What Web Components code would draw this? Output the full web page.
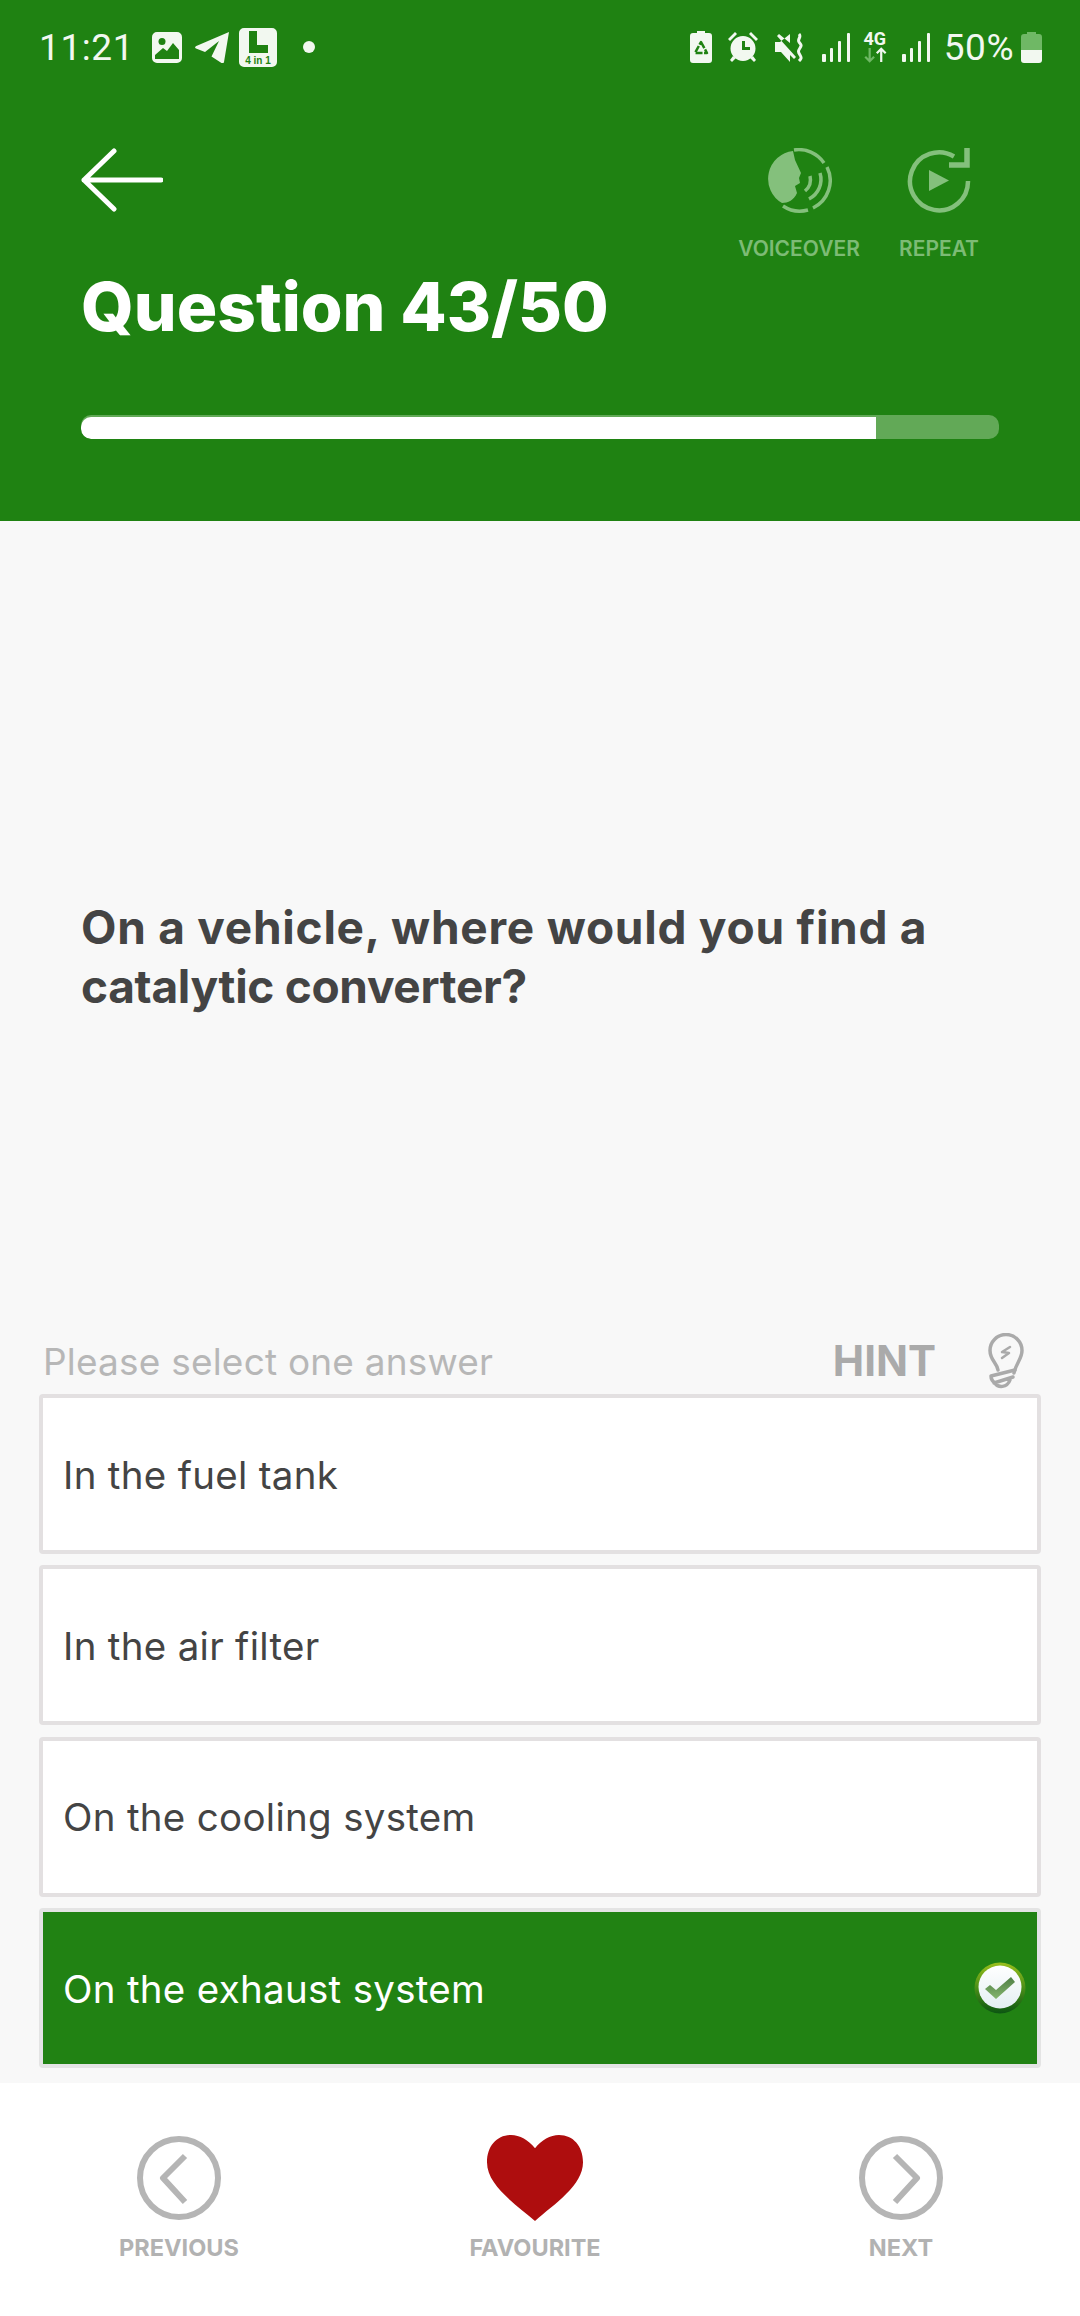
<!DOCTYPE html>
<html lang="en">
<head>
<meta charset="utf-8">
<title>Question 43/50</title>
<style>
    html, body { margin: 0; padding: 0; background: #f8f8f8; }
    body { width: 1080px; height: 2316px; overflow: hidden; font-family: Inter, "Liberation Sans", sans-serif; }
    quiz-app { height: 2316px; }
</style>
</head>
<body>
<quiz-app>
    <status-bar></status-bar>
    <quiz-header current="43" total="50" progress="86.6"></quiz-header>
    <quiz-question>On a vehicle, where would you find a<br><span style="letter-spacing:-0.3px">catalytic converter?</span></quiz-question>
    <hint-row>Please select one answer</hint-row>
    <answer-list>
        <answer-option>In the fuel tank</answer-option>
        <answer-option>In the air filter</answer-option>
        <answer-option>On the cooling system</answer-option>
        <answer-option selected>On the exhaust system</answer-option>
    </answer-list>
    <quiz-nav></quiz-nav>
</quiz-app>

<script>
class QuizApp extends HTMLElement {
    constructor() {
        super();
        this.attachShadow({ mode: 'open' });
        this.shadowRoot.innerHTML = `
            <style>
                :host { display: flex; flex-direction: column; background: #f8f8f8; }
            </style>
            <slot></slot>
        `;
    }
}

class StatusBar extends HTMLElement {
    constructor() {
        super();
        this.attachShadow({ mode: 'open' });
        this.shadowRoot.innerHTML = `
            <style>
                :host {
                    display: flex;
                    align-items: center;
                    height: 94px;
                    box-sizing: border-box;
                    padding: 0 38px 0 39px;
                    background: #1f8212;
                    color: #f2f8f0;
                    font: 400 37px/1 Roboto, sans-serif;
                }
                svg { display: block; flex: none; fill: #f2f8f0; }
                .left, .right { display: flex; align-items: center; }
                .right { margin-left: auto; }
                .time { letter-spacing: 0.6px; margin-right: 18px; }
                .pct { margin: 0 7px 0 14px; letter-spacing: 0.5px; }
                .net { display: flex; flex-direction: column; align-items: center; width: 28px; margin: 0 13px 0 11px; }
                .net b { font: 700 18px/16px Roboto, sans-serif; }
            </style>
            <div class="left">
                <span class="time">11:21</span>
                <svg width="30" height="31" viewBox="0 0 30 31" style="margin-right:13px">
                    <path fill-rule="evenodd" d="M5 0h20a5 5 0 0 1 5 5v21a5 5 0 0 1-5 5H5a5 5 0 0 1-5-5V5a5 5 0 0 1 5-5zM3 27h24v-9l-6-7-6 8-4-3-8 7z"/>
                    <circle cx="10" cy="9.500" r="3.500" fill="#1f8212"/>
                </svg>
                <svg width="35" height="31" viewBox="0 0 35 31" style="margin-right:9px">
                    <path d="M34 0 29 30c-.300 1.500-1.500 1.500-2.500 1l-10-6.500L24 9 10 20 1 16.500c-1.300-.500-1.300-2 .300-2.600z"/>
                </svg>
                <svg width="38" height="39" viewBox="0 0 38 39" style="margin-right:26px">
                    <path fill-rule="evenodd" d="M5 0h28a5 5 0 0 1 5 5v29a5 5 0 0 1-5 5H5a5 5 0 0 1-5-5V5a5 5 0 0 1 5-5zM10 3v22h19v-8H18V3z"/>
                    <text x="19" y="36" text-anchor="middle" font-family="Liberation Sans, sans-serif" font-weight="700" font-size="10" fill="#1f8212">4 in 1</text>
                </svg>
                <svg width="12" height="12" viewBox="0 0 12 12"><circle cx="6" cy="6" r="6"/></svg>
            </div>
            <div class="right">
                <svg width="22" height="32" viewBox="0 0 22 32" style="margin-right:16px">
                    <path d="M7 0h8v2h4a3 3 0 0 1 3 3v24a3 3 0 0 1-3 3H3a3 3 0 0 1-3-3V5a3 3 0 0 1 3-3h4z"/>
                    <path d="M11 11 17 22H5Z" fill="none" stroke="#1f8212" stroke-width="2.500" stroke-linejoin="round" stroke-dasharray="7 1.500"/>
                </svg>
                <svg width="30" height="30" viewBox="0 0 30 30" style="margin-right:16px">
                    <path fill-rule="evenodd" d="M15 4a12.500 12.500 0 1 1 0 25 12.500 12.500 0 0 1 0-25zM14 9v9h8v-3h-5V9z"/>
                    <path d="M0 7 7 0l2 2-7 7zM30 7l-7-7-2 2 7 7zM5 24l3 2-4 4-2-2zM25 24l-3 2 4 4 2-2z"/>
                </svg>
                <svg width="31" height="29" viewBox="0 0 31 29" style="margin-right:17px">
                    <path d="M1 9h5l10-8v9L5 1 3 3l19 21-2 2-4-4v7L7 19H1z"/>
                    <path d="M25 1c3 3-2 5 0 8s3 3 1 6-2 4 0 7 1 4-1 6" fill="none" stroke="#f2f8f0" stroke-width="3"/>
                </svg>
                <svg width="28" height="29" viewBox="0 0 28 29">
                    <rect x="0" y="21" width="4" height="8" rx="1"/><rect x="8" y="15" width="3" height="14" rx="1"/><rect x="16" y="8" width="3" height="21" rx="1"/><rect x="25" y="0" width="3" height="29" rx="1"/>
                </svg>
                <div class="net">
                    <b>4G</b>
                    <svg width="26" height="16" viewBox="0 0 26 18">
                        <path d="M7 1v15M2 11l5 5 5-5" fill="none" stroke="#6fb865" stroke-width="2.500"/>
                        <path d="M20 17V2M15 7l5-5 5 5" fill="none" stroke="#f2f8f0" stroke-width="2.500"/>
                    </svg>
                </div>
                <svg width="28" height="29" viewBox="0 0 28 29">
                    <rect x="0" y="21" width="4" height="8" rx="1"/><rect x="8" y="15" width="3" height="14" rx="1"/><rect x="16" y="8" width="3" height="21" rx="1"/><rect x="25" y="0" width="3" height="29" rx="1"/>
                </svg>
                <span class="pct">50%</span>
                <svg width="21" height="31" viewBox="0 0 21 31">
                    <path d="M6 0h9v2h3a3 3 0 0 1 3 3v14H0V5a3 3 0 0 1 3-3h3z" fill="#6fb865"/>
                    <path d="M0 18h21v10a3 3 0 0 1-3 3H3a3 3 0 0 1-3-3z"/>
                </svg>
            </div>
        `;
    }
}

class QuizHeader extends HTMLElement {
    constructor() {
        super();
        this.attachShadow({ mode: 'open' });
    }

    connectedCallback() {
        const current = this.getAttribute('current');
        const total = this.getAttribute('total');
        const progress = this.getAttribute('progress');
        this.shadowRoot.innerHTML = `
            <style>
                :host {
                    display: block;
                    height: 427px;
                    box-sizing: border-box;
                    padding: 54px 81px 0;
                    background: #1f8212;
                    color: #fff;
                }
                .top { display: flex; justify-content: space-between; align-items: flex-start; }
                .back { display: block; }
                .actions { display: flex; margin-right: -10px; }
                .action { width: 140px; display: flex; flex-direction: column; align-items: center; }
                .action svg { display: block; fill: #84c07c; }
                .action span {
                    margin-top: 26px;
                    font: 600 21px/20px Inter, sans-serif;
                    color: #7dbb75;
                }
                h1 {
                    margin: 8px 0 0;
                    font: 800 67.500px/80px Inter, sans-serif;
                }
                .track {
                    height: 24px;
                    margin-top: 68px;
                    border-radius: 10px;
                    background: #62a957;
                    overflow: hidden;
                }
                .fill { height: 22px; margin-top: 1px; background: #fff; border-radius: 10px 0 0 10px; transform: translateY(1px); }
            </style>
            <div class="top">
                <svg class="back" width="82" height="64" viewBox="0 0 82 64" fill="none" stroke="#fff" stroke-width="5" stroke-linecap="round" stroke-linejoin="round">
                    <path d="M33 3 3 32l30 29M3 32h77"/>
                </svg>
                <div class="actions">
                    <div class="action">
                        <svg width="65" height="65" viewBox="0 0 65 65">
                            <path d="M26 3 A28 28 0 0 0 15 55 C21 55 27 52 30 45 L28 38 L33 35 L32 30 L34 25 L28 12 Z"/>
                            <g fill="none" stroke="#84c07c" stroke-width="3.500">
                                <path d="M27 2A30.500 30.500 0 0 1 57 15"/>
                                <path d="M16 58A30.500 30.500 0 0 0 41 62"/>
                                <path d="M60 19A30.500 30.500 0 0 1 46 60"/>
                                <path d="M53 25A22 22 0 0 1 42 51"/>
                                <path d="M43 28A15 15 0 0 1 38 43"/>
                            </g>
                        </svg>
                        <span>VOICEOVER</span>
                    </div>
                    <div class="action">
                        <svg width="65" height="65" viewBox="0 0 65 65">
                            <path d="M47 8.500A29 29 0 1 0 61 33" fill="none" stroke="#84c07c" stroke-width="4.500"/>
                            <path d="M60 0v17H42" fill="none" stroke="#84c07c" stroke-width="5.500"/>
                            <path d="M22 22v21l20-10.500z"/>
                        </svg>
                        <span>REPEAT</span>
                    </div>
                </div>
            </div>
            <h1>Question ${current}/${total}</h1>
            <div class="track"><div class="fill" style="width:${progress}%"></div></div>
        `;
    }
}

class QuizQuestion extends HTMLElement {
    constructor() {
        super();
        this.attachShadow({ mode: 'open' });
        this.shadowRoot.innerHTML = `
            <style>
                :host {
                    display: flex;
                    align-items: center;
                    box-sizing: border-box;
                    height: 815px;
                    padding: 57px 81px 0;
                    color: #444;
                    font: 700 46px/59px Inter, sans-serif;
                    letter-spacing: 0.75px;
                }
            </style>
            <div><slot></slot></div>
        `;
    }
}

class HintRow extends HTMLElement {
    constructor() {
        super();
        this.attachShadow({ mode: 'open' });
        this.shadowRoot.innerHTML = `
            <style>
                :host {
                    display: flex;
                    align-items: center;
                    box-sizing: border-box;
                    height: 58px;
                    padding: 0 56px 8px 43px;
                    color: #b7b7b7;
                    font: 400 37px/1 Inter, sans-serif;
                    letter-spacing: 0.2px;
                }
                .hint {
                    margin-left: auto;
                    font: 700 42px/1 Inter, sans-serif;
                    letter-spacing: 0;
                    color: #aaa;
                }
                svg { display: block; margin-left: 52px; }
            </style>
            <slot></slot>
            <span class="hint">HINT</span>
            <svg width="36" height="56" viewBox="0 0 36 56" fill="none" stroke="#aaa" stroke-width="3.500" stroke-linecap="round">
                <path d="M10 37C9 30 2 27 2 17.500A16 16 0 0 1 34 17.500C34 26 28 30 26 40"/>
                <path d="M3 43 27 37M6 50 25 44M7 50c3 5 12 5 15-3M3 43c0 3 1 5 4 7"/>
                <path d="M22 14 14 19 21 20 14 25" stroke-width="2.500" stroke-linejoin="round"/>
            </svg>
        `;
    }
}

class AnswerList extends HTMLElement {
    constructor() {
        super();
        this.attachShadow({ mode: 'open' });
        this.shadowRoot.innerHTML = `
            <style>
                :host {
                    display: flex;
                    flex-direction: column;
                    gap: 11.500px;
                    height: 689px;
                    box-sizing: border-box;
                    padding: 0 39px 15px;
                }
            </style>
            <slot></slot>
        `;
    }
}

class AnswerOption extends HTMLElement {
    constructor() {
        super();
        this.attachShadow({ mode: 'open' });
        this.shadowRoot.innerHTML = `
            <style>
                :host {
                    display: flex;
                    align-items: center;
                    box-sizing: border-box;
                    height: 160px;
                    padding: 2px 20px 0;
                    border: 4px solid #e3e0e1;
                    border-radius: 4px;
                    background: #fff;
                    color: #444;
                    font: 400 38.500px/1 Inter, sans-serif;
                    letter-spacing: 0.3px;
                }
                :host([selected]) { background: #218213; color: #fff; border-color: #e4e4e4; }
                svg { display: none; margin-left: auto; margin-right: -9px; margin-top: -2px; }
                :host([selected]) svg { display: block; }
            </style>
            <slot></slot>
            <svg width="52" height="52" viewBox="0 0 52 52">
                <defs>
                    <linearGradient id="ring" x1="0" y1="0" x2="0" y2="1">
                        <stop offset="0" stop-color="#9abf1c"/>
                        <stop offset="0.5" stop-color="#4a8f18"/>
                        <stop offset="1" stop-color="#0b5512"/>
                    </linearGradient>
                    <linearGradient id="face" x1="0" y1="0" x2="0" y2="1">
                        <stop offset="0" stop-color="#ffffff"/>
                        <stop offset="1" stop-color="#e4eff3"/>
                    </linearGradient>
                    <linearGradient id="tick" x1="0" y1="0" x2="0" y2="1">
                        <stop offset="0" stop-color="#4f7f45"/>
                        <stop offset="1" stop-color="#86b66f"/>
                    </linearGradient>
                </defs>
                <circle cx="26" cy="26" r="25.500" fill="url(#ring)"/>
                <circle cx="26" cy="25" r="21.500" fill="url(#face)"/>
                <path d="M11 27l5-4 6 5 15-13 4 5-19 17z" fill="url(#tick)"/>
            </svg>
        `;
    }
}

class NavAction extends HTMLElement {
    constructor() {
        super();
        this.attachShadow({ mode: 'open' });
        this.shadowRoot.innerHTML = `
            <style>
                :host { display: flex; flex-direction: column; align-items: center; width: 240px; }
                .icon { display: flex; align-items: center; justify-content: center; height: 88px; }
                .label {
                    margin-top: 12px;
                    font: 700 23.500px/28px Inter, sans-serif;
                    color: #b2b2b2;
                }
            </style>
            <div class="icon"><slot name="icon"></slot></div>
            <div class="label"><slot></slot></div>
        `;
    }
}

class QuizNav extends HTMLElement {
    constructor() {
        super();
        this.attachShadow({ mode: 'open' });
        this.shadowRoot.innerHTML = `
            <style>
                :host {
                    display: flex;
                    justify-content: space-between;
                    box-sizing: border-box;
                    height: 233px;
                    padding: 51px 59px 0;
                    background: #fff;
                }
                svg { display: block; }
                .mid { margin-right: 10px; }
            </style>
            <nav-action>
                <svg slot="icon" width="86" height="86" viewBox="0 0 86 86" fill="none" stroke="#b5b5b5" stroke-width="6">
                    <circle cx="43" cy="43" r="39"/>
                    <path d="M49 21 27 43l22 24" stroke-linejoin="round"/>
                </svg>
                PREVIOUS
            </nav-action>
            <nav-action class="mid">
                <svg slot="icon" width="96" height="86" viewBox="0 0 88 85" preserveAspectRatio="none">
                    <path fill="#ae0d0e" d="M44 13C38 5 30 0 22 0 9 0 0 11 0 27 0 50 26 68 44 85 62 68 88 50 88 27 88 11 79 0 66 0 58 0 50 5 44 13Z"/>
                </svg>
                FAVOURITE
            </nav-action>
            <nav-action>
                <svg slot="icon" width="86" height="86" viewBox="0 0 86 86" fill="none" stroke="#b5b5b5" stroke-width="6">
                    <circle cx="43" cy="43" r="39"/>
                    <path d="M37 21 59 43 37 67" stroke-linejoin="round"/>
                </svg>
                NEXT
            </nav-action>
        `;
    }
}

customElements.define('quiz-app', QuizApp);
customElements.define('status-bar', StatusBar);
customElements.define('quiz-header', QuizHeader);
customElements.define('quiz-question', QuizQuestion);
customElements.define('hint-row', HintRow);
customElements.define('answer-list', AnswerList);
customElements.define('answer-option', AnswerOption);
customElements.define('nav-action', NavAction);
customElements.define('quiz-nav', QuizNav);
</script>
</body>
</html>
